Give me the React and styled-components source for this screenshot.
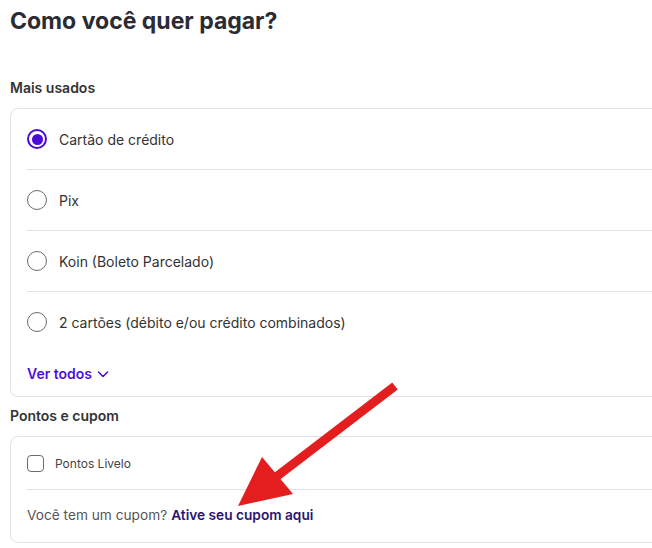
import React from "react";
import styled, { createGlobalStyle } from "styled-components";

const Global = createGlobalStyle`
  html, body { margin: 0; padding: 0; background: #fff; overflow: hidden; }
  body { font-family: "Inter", "Liberation Sans", sans-serif; color: #333; }
`;

const Page = styled.div`
  position: relative;
  width: 720px;
  height: 548px;
  padding: 0 0 0 10px;
  box-sizing: border-box;
  overflow: hidden;
`;

const Title = styled.h1`
  margin: 0;
  padding-top: 5px;
  font-size: 23px;
  line-height: 32px;
  font-weight: 700;
  color: #2b2b33;
`;

const SectionLabel = styled.h2`
  margin: ${(p) => p.$mt}px 0 0;
  font-size: 14px;
  line-height: 20px;
  font-weight: 600;
  color: #333;
`;

const Card = styled.div`
  margin-top: ${(p) => p.$mt}px;
  border: 1px solid #dfe1e6;
  border-radius: 8px;
  padding-left: 16px;
  background: #fff;
`;

const OptionRow = styled.label`
  display: flex;
  align-items: center;
  gap: 12px;
  height: 60px;
  border-bottom: ${(p) => (p.$last ? "none" : "1px solid #dfe3e8")};
  font-size: 14px;
  color: #333;
  cursor: pointer;
`;

const Radio = styled.span`
  width: 20px;
  height: 20px;
  box-sizing: border-box;
  border-radius: 50%;
  border: ${(p) => (p.$checked ? "2px solid #4a0ad8" : "1.5px solid #6b6b6b")};
  display: flex;
  align-items: center;
  justify-content: center;
  flex: none;
  &::after {
    content: "";
    display: ${(p) => (p.$checked ? "block" : "none")};
    width: 11px;
    height: 11px;
    border-radius: 50%;
    background: #4a0ad8;
  }
`;

const SeeAll = styled.button`
  display: flex;
  align-items: center;
  gap: 4px;
  margin: 12px 0 0;
  padding: 0 0 12px;
  border: none;
  background: none;
  font-family: inherit;
  font-size: 14px;
  line-height: 20px;
  font-weight: 600;
  color: #4f0fdb;
  cursor: pointer;
`;

const CheckRow = styled.label`
  display: flex;
  align-items: center;
  gap: 11px;
  height: 52px;
  border-bottom: 1px solid #dfe3e8;
  font-size: 12px;
  color: #444;
`;

const Checkbox = styled.span`
  width: 17px;
  height: 17px;
  box-sizing: border-box;
  border: 1.5px solid #6b6b6b;
  border-radius: 4px;
  flex: none;
`;

const CouponLine = styled.p`
  margin: 0;
  padding-bottom: 2px;
  height: 50px;
  display: flex;
  align-items: center;
  font-size: 13.7px;
  color: #555;
  gap: 4px;
`;

const CouponLink = styled.a`
  font-weight: 600;
  color: #2a1670;
  text-decoration: none;
`;

const Arrow = styled.svg`
  position: absolute;
  left: 0;
  top: 0;
  pointer-events: none;
`;

const options = [
  "Cartão de crédito",
  "Pix",
  "Koin (Boleto Parcelado)",
  "2 cartões (débito e/ou crédito combinados)",
];

export default function App() {
  return (
    <>
      <Global />
      <Page>
        <Title>Como você quer pagar?</Title>
        <SectionLabel $mt={41}>Mais usados</SectionLabel>
        <Card $mt={10}>
          {options.map((o, i) => (
            <OptionRow key={o} $last={i === options.length - 1}>
              <Radio $checked={i === 0} />
              {o}
            </OptionRow>
          ))}
          <SeeAll>
            Ver todos
            <svg width="14" height="14" viewBox="0 0 14 14" fill="none">
              <path d="M2.5 5l4.5 4.5L11.5 5" stroke="#4f0fdb" strokeWidth="1.6" strokeLinecap="round" strokeLinejoin="round" />
            </svg>
          </SeeAll>
        </Card>
        <SectionLabel $mt={9}>Pontos e cupom</SectionLabel>
        <Card $mt={10}>
          <CheckRow>
            <Checkbox />
            Pontos Livelo
          </CheckRow>
          <CouponLine>
            Você tem um cupom?
            <CouponLink href="#">Ative seu cupom aqui</CouponLink>
          </CouponLine>
        </Card>
        <Arrow width="652" height="548" viewBox="0 0 652 548">
          <line x1="395" y1="386" x2="276" y2="477" stroke="#e41e1e" strokeWidth="9" />
          <polygon points="238,506 262,457 293,494" fill="#e41e1e" />
        </Arrow>
      </Page>
    </>
  );
}
